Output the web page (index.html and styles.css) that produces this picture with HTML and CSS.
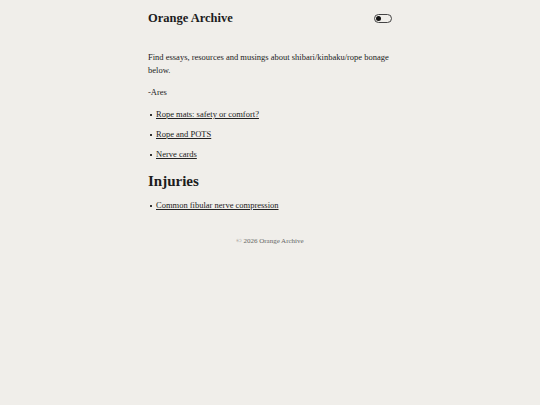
FILE: index.html
```html
<!DOCTYPE html>
<html lang="en">
<head>
<meta charset="utf-8">
<title>Orange Archive</title>
<link rel="stylesheet" href="styles.css">
</head>
<body>
<div class="page">
  <header class="top">
    <h1 class="brand">Orange Archive</h1>
    <span class="toggle"><span class="knob"></span></span>
  </header>
  <main class="content">
    <p class="intro">Find essays, resources and musings about shibari/kinbaku/rope bonage below.</p>
    <p class="sig">-Ares</p>
    <ul class="links">
      <li><a href="#">Rope mats: safety or comfort?</a></li>
      <li><a href="#">Rope and POTS</a></li>
      <li><a href="#">Nerve cards</a></li>
    </ul>
    <h2 class="section">Injuries</h2>
    <ul class="links">
      <li><a href="#">Common fibular nerve compression</a></li>
    </ul>
  </main>
  <footer class="foot">© 2026 Orange Archive</footer>
</div>
</body>
</html>
```
FILE: styles.css
```css
html, body {
  margin: 0;
  padding: 0;
  background: #f0eeea;
}
body {
  font-family: "Liberation Serif", "DejaVu Serif", serif;
  color: #222;
}
.page {
  width: 244px;
  margin: 0 auto;
  padding-top: 9px;
}
.top {
  display: flex;
  justify-content: space-between;
  align-items: center;
  height: 18px;
}
.brand {
  margin: 0;
  font-size: 12.5px;
  font-weight: bold;
  color: #1c1c1c;
}
.toggle {
  width: 14px;
  height: 7px;
  border: 1px solid #444;
  border-radius: 5px;
  display: flex;
  align-items: center;
  padding: 0 1px;
  box-sizing: content-box;
}
.knob {
  width: 5px;
  height: 5px;
  border-radius: 50%;
  background: #111;
}
.content {
  padding-top: 24px;
  font-size: 8.5px;
  line-height: 13px;
}
.intro {
  margin: 0 0 9px;
}
.sig {
  margin: 0 0 9px;
}
.links {
  margin: 0;
  padding: 0;
  list-style: none;
}
.links li {
  position: relative;
  padding-left: 8px;
  margin-bottom: 7px;
}
.links li::before {
  content: "";
  position: absolute;
  left: 2px;
  top: 6px;
  width: 2px;
  height: 2px;
  background: #333;
}
.links a {
  color: #222;
  text-decoration: underline;
  text-underline-offset: 1px;
}
.section {
  margin: 10px 0 8px;
  font-size: 15px;
  line-height: 20px;
  font-weight: bold;
  color: #1c1c1c;
}
.foot {
  text-align: center;
  font-size: 7px;
  color: #666;
  padding-top: 18px;
}
```
